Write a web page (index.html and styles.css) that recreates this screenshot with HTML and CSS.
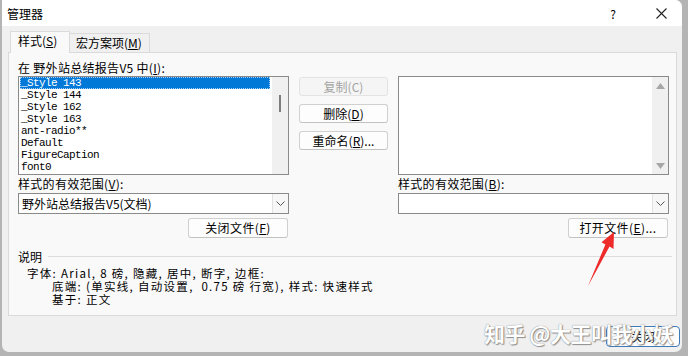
FILE: index.html
```html
<!DOCTYPE html>
<html lang="zh-CN">
<head>
  <meta charset="UTF-8" />
  <title>管理器</title>
  <link rel="stylesheet" href="styles.css">
</head>
<body>

<div class="window">
  <!-- Title bar -->
  <div class="titlebar">
    <span class="title">管理器</span>
    <span class="tb-help">?</span>
    <span class="tb-close">
      <svg width="11" height="11" viewBox="0 0 11 11"><path d="M0.5 0.5L10.5 10.5M10.5 0.5L0.5 10.5" stroke="#222" stroke-width="1.1" fill="none"/></svg>
    </span>
  </div>

  <div class="dialog">
    <div class="tabs">
      <div class="tab active">样式(<u>S</u>)</div>
      <div class="tab">宏方案项(<u>M</u>)</div>
    </div>

    <div class="panel">
      <div class="grid">
        <div class="lbl col1">在 野外站总结报告V5 中(<u>I</u>):</div>
        <div class="row-empty"></div>

        <div class="list col1">
          <div class="items">
            <div class="item selected">_Style 143</div>
            <div class="item">_Style 144</div>
            <div class="item">_Style 162</div>
            <div class="item">_Style 163</div>
            <div class="item">ant-radio**</div>
            <div class="item">Default</div>
            <div class="item">FigureCaption</div>
            <div class="item">font0</div>
          </div>
          <div class="vscroll"><div class="thumb"></div></div>
        </div>

        <div class="mid">
          <div class="btn disabled">复制(C)</div>
          <div class="btn">删除(<u>D</u>)</div>
          <div class="btn">重命名(<u>R</u>)...</div>
        </div>

        <div class="list col3">
          <div class="items"></div>
          <div class="vscroll arrows">
            <svg width="9" height="6" viewBox="0 0 9 6"><path d="M0 6L4.5 0L9 6Z" fill="#a6a6a6"/></svg>
            <svg width="9" height="6" viewBox="0 0 9 6"><path d="M0 0L4.5 6L9 0Z" fill="#a6a6a6"/></svg>
          </div>
        </div>

        <div class="lbl lbl-mid col1">样式的有效范围(<u>V</u>):</div>
        <div class="lbl lbl-mid col3">样式的有效范围(<u>B</u>):</div>

        <div class="combo col1">
          <span class="combo-text">野外站总结报告V5(文档)</span>
          <span class="combo-drop"><svg width="9" height="5" viewBox="0 0 9 5"><path d="M0.5 0.5L4.5 4.5L8.5 0.5" stroke="#555" fill="none"/></svg></span>
        </div>
        <div class="combo col3">
          <span class="combo-text"></span>
          <span class="combo-drop"><svg width="9" height="5" viewBox="0 0 9 5"><path d="M0.5 0.5L4.5 4.5L8.5 0.5" stroke="#555" fill="none"/></svg></span>
        </div>

        <div class="btn-row col1"><div class="btn wide">关闭文件(<u>F</u>)</div></div>
        <div class="btn-row col3"><div class="btn wide">打开文件(<u>E</u>)...</div></div>
      </div>

      <div class="desc">
        <div class="desc-head"><span>说明</span><span class="rule"></span></div>
        <div class="desc-text">
          <div>字体: Arial, 8 磅, 隐藏, 居中, 断字, 边框:</div>
          <div class="indent">底端: (单实线, 自动设置,&nbsp; 0.75 磅 行宽), 样式: 快速样式</div>
          <div class="indent">基于: 正文</div>
        </div>
      </div>
    </div>

    <div class="footer">
      <div class="btn primary">关闭</div>
    </div>
  </div>

  <div class="watermark">知乎 @大王叫我小妖</div>

  <svg class="arrow" width="50" height="66" viewBox="0 0 50 66">
    <polygon points="39,7 38.5,24 34.5,21.6 13,61 30.4,19.4 26.5,17.3" fill="#ee2b2b"/>
  </svg>
</div>

</body>
</html>
```

FILE: styles.css
```css
:root {
  --face: #f0f0f0;
  --panel: #f9f9f9;
  --border: #dadada;
  --list-border: #8a8a8a;
  --select: #0078d7;
  --ui-font: "Noto Sans CJK SC", "Noto Sans", sans-serif;
  --mono: "Liberation Mono", "Noto Sans CJK SC", monospace;
}

* {
  box-sizing: border-box;
  margin: 0;
  padding: 0;
}

body {
  background: #b4b4b4;
  font-family: var(--ui-font);
  font-size: 12px;
  color: #000;
  overflow: hidden;
}

.window {
  position: relative;
  width: 680px;
  height: 352px;
  margin-left: 2px;
  background: var(--face);
  border-radius: 0 7px 7px 7px;
  overflow: hidden;
}

/* Title bar */
.titlebar {
  height: 26px;
  background: #fff;
  display: flex;
  align-items: center;
  padding-left: 5px;
}

.title {
  font-size: 12px;
  flex: 1;
}

.tb-help {
  width: 46px;
  text-align: center;
  font-size: 12px;
}

.tb-close {
  width: 46px;
  display: flex;
  justify-content: center;
  padding-left: 4px;
}

/* Tabs */
.dialog {
  padding: 5px 0 0 6px;
}

.tabs {
  display: flex;
  align-items: flex-end;
  height: 21px;
  padding-left: 2px;
}

.tab {
  height: 19px;
  padding: 0 7px 0 6px;
  border: 1px solid var(--border);
  border-bottom: none;
  background: var(--face);
  line-height: 18px;
}

.tab.active {
  height: 22px;
  width: 60px;
  padding-left: 7px;
  background: var(--panel);
  position: relative;
  z-index: 1;
  margin-bottom: -1px;
}

.tab + .tab {
  border-left: none;
}

.panel {
  width: 669px;
  height: 264px;
  background: var(--panel);
  border: 1px solid var(--border);
  padding: 7px 0 0 9px;
}

.grid {
  display: grid;
  grid-template-columns: 271px 89px 271px;
  grid-template-rows: 16px 99px 18px 21px 24px;
  column-gap: 10px;
}

.col1 { grid-column: 1; }
.col3 { grid-column: 3; }

.row-empty {
  grid-column: 2 / 4;
}

.lbl {
  line-height: 16px;
  white-space: nowrap;
  letter-spacing: 0.3px;
}

.lbl-mid {
  line-height: 18px;
}

/* List boxes */
.list {
  border: 1px solid var(--list-border);
  background: #fff;
  display: flex;
}

.items {
  flex: 1;
  padding: 0 1px;
}

.item {
  height: 12px;
  line-height: 12px;
  font-family: var(--mono);
  font-size: 11px;
  letter-spacing: -0.6px;
  padding-left: 1px;
  white-space: nowrap;
}

.item.selected {
  background: var(--select);
  color: #fff;
  outline: 1px dotted #9fd0ff;
  outline-offset: -1px;
  margin-right: 1px;
}

.vscroll {
  width: 16px;
  background: var(--face);
  display: flex;
  justify-content: center;
}

.thumb {
  width: 2px;
  height: 17px;
  margin-top: 18px;
  background: #7d7d7d;
}

.vscroll.arrows {
  flex-direction: column;
  align-items: center;
  justify-content: space-between;
  padding: 6px 0 5px;
}

/* Buttons */
.mid {
  display: flex;
  flex-direction: column;
  gap: 8px;
  padding-top: 1px;
}

.btn {
  height: 19px;
  line-height: 17px;
  text-align: center;
  background: #fdfdfd;
  border: 1px solid #d0d0d0;
  border-bottom-color: #c2c2c2;
  border-radius: 3px;
  white-space: nowrap;
}

.btn.disabled {
  background: #f5f5f5;
  border-color: #e3e3e3;
  color: #a3a3a3;
}

.btn-row {
  display: flex;
  justify-content: flex-end;
  padding-top: 4px;
}

.btn.wide {
  width: 100px;
  height: 20px;
  line-height: 18px;
  margin-right: 1px;
  letter-spacing: 0.4px;
}

/* Combo boxes */
.combo {
  border: 1px solid var(--list-border);
  background: #fff;
  display: flex;
  align-items: center;
}

.combo-text {
  flex: 1;
  padding-left: 3px;
  font-size: 12px;
}

.combo-drop {
  width: 16px;
  height: 19px;
  border-left: 1px solid #e2e2e2;
  background: #f7f7f7;
  display: flex;
  align-items: center;
  justify-content: center;
}

/* Description group */
.desc {
  margin-top: 11px;
}

.desc-head {
  display: flex;
  align-items: center;
  height: 14px;
  padding-right: 4px;
}

.rule {
  flex: 1;
  border-top: 1px solid #dcdcdc;
  margin-left: 6px;
}

.desc-text {
  padding: 4px 0 0 9px;
  font-size: 11.5px;
  line-height: 13px;
  letter-spacing: 1.3px;
  white-space: nowrap;
}

.desc-text .indent {
  padding-left: 25px;
}

/* Footer */
.footer {
  display: flex;
  justify-content: flex-end;
  padding: 10px 2px 0 0;
}

.btn.primary {
  width: 74px;
  height: 21px;
  line-height: 19px;
  border: 1px solid #3d7ab8;
  border-radius: 4px;
  background: #fdfdfd;
}

/* Overlays */
.watermark {
  position: absolute;
  left: 482px;
  top: 318px;
  font-size: 21px;
  font-weight: bold;
  color: #fff;
  letter-spacing: -0.5px;
  white-space: nowrap;
  text-shadow: 0 0 1px #666, 1px 1px 1px #8a8a8a;
  opacity: 0.92;
}

.arrow {
  position: absolute;
  left: 573px;
  top: 225px;
}
```
